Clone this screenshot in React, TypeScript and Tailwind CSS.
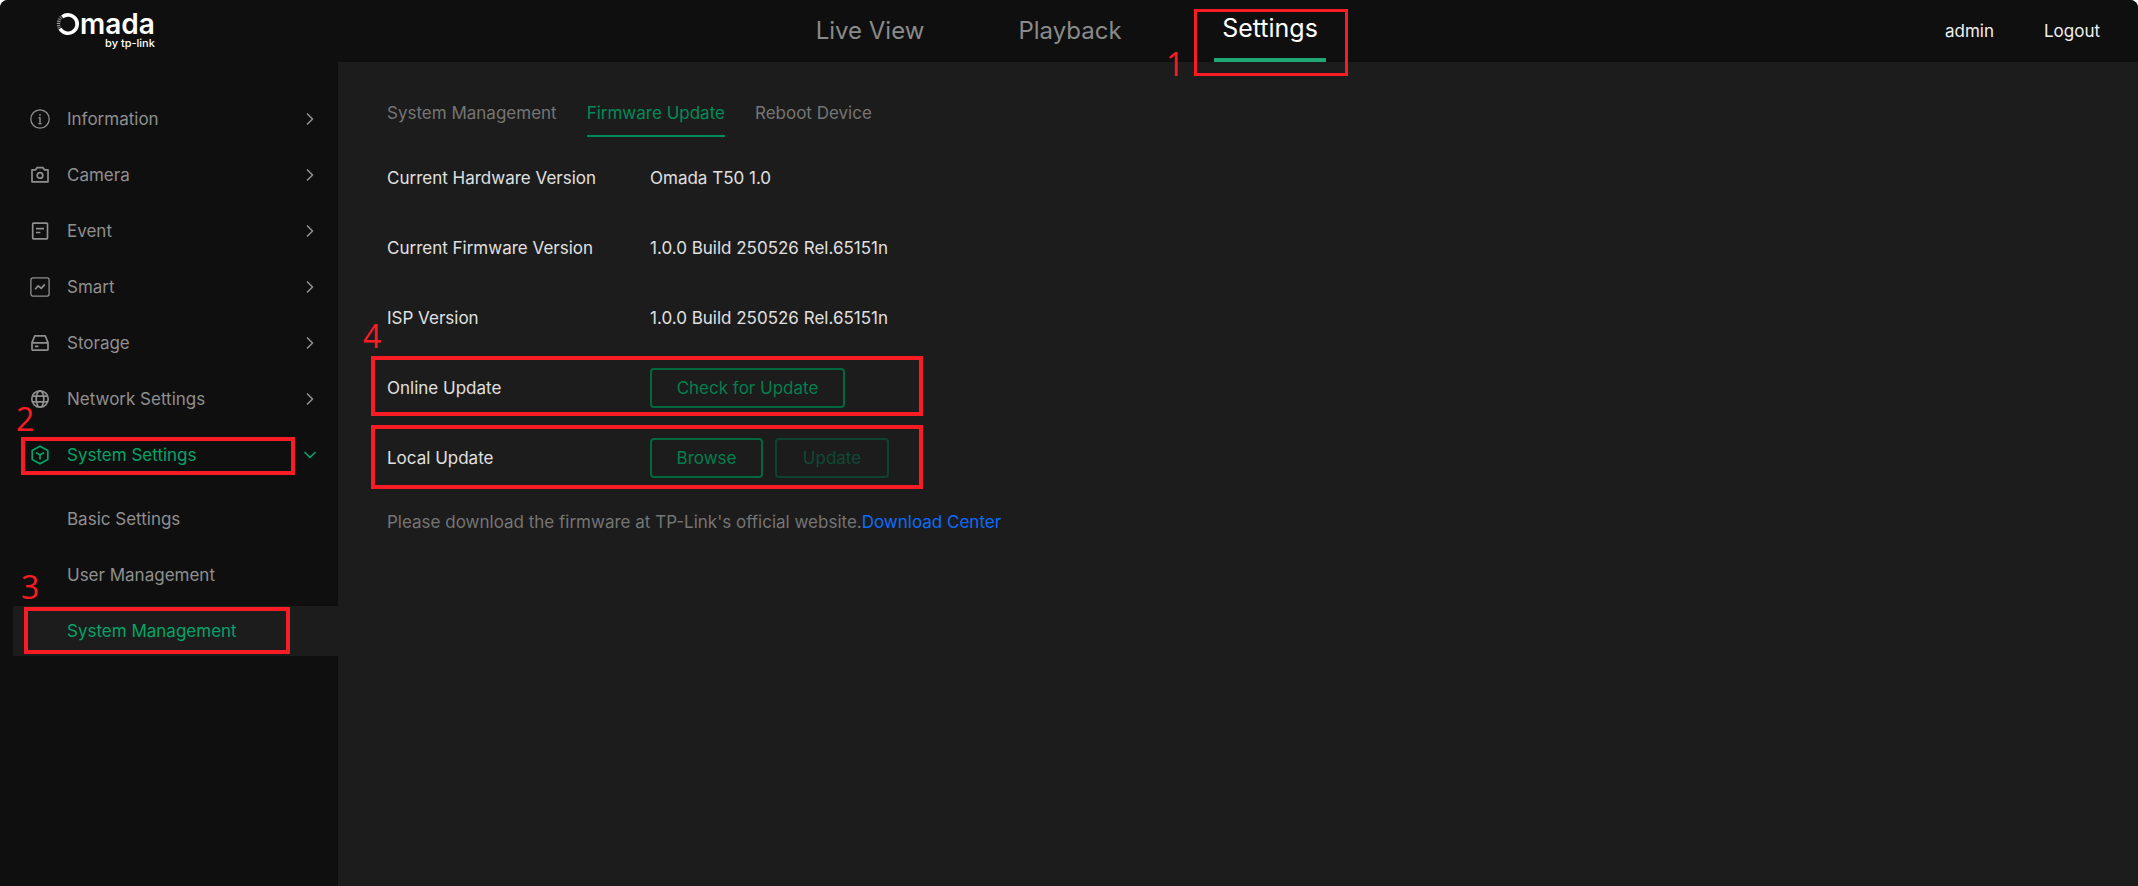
import type { ReactNode } from 'react';
import { ChevronDown, ChevronRight } from 'lucide-react';

interface IconProps {
  children: ReactNode;
}

function Icon({ children }: IconProps) {
  return (
    <svg
      viewBox="0 0 20 20"
      className="h-5 w-5 shrink-0"
      fill="none"
      stroke="currentColor"
      strokeWidth="1.7"
      strokeLinejoin="round"
      aria-hidden="true"
    >
      {children}
    </svg>
  );
}

const menu = [
  {
    label: 'Information',
    icon: (
      <Icon>
        <circle cx="10" cy="10" r="9.2" strokeWidth="1.3" />
        <path d="M10 5v1.8M8.6 8.7H10v5.8M8.4 14.6h3.2" strokeWidth="1.4" />
      </Icon>
    ),
  },
  {
    label: 'Camera',
    icon: (
      <Icon>
        <path d="M2 4.8h3.6l1.5-2.2h5.8l1.5 2.2H18v12H2z" />
        <circle cx="10" cy="10.4" r="2.8" />
      </Icon>
    ),
  },
  {
    label: 'Event',
    icon: (
      <Icon>
        <rect x="2.7" y="2.2" width="14.8" height="15.6" rx="0.8" />
        <path d="M6 7.7h8M6 11.5h4.4" />
      </Icon>
    ),
  },
  {
    label: 'Smart',
    icon: (
      <Icon>
        <rect x="0.9" y="0.9" width="18.2" height="18.2" rx="2" strokeWidth="1.3" />
        <path d="M5.2 12.2l3-3.4 3 2.6 3.6-4" />
      </Icon>
    ),
  },
  {
    label: 'Storage',
    icon: (
      <Icon>
        <path d="M4.8 2.8h10.4L18 9.6v6.6a1 1 0 0 1-1 1H3a1 1 0 0 1-1-1V9.6zM2 9.8h16M4.8 13.4h3.6" />
      </Icon>
    ),
  },
  {
    label: 'Network Settings',
    icon: (
      <Icon>
        <circle cx="10" cy="10" r="8.2" />
        <ellipse cx="10" cy="10" rx="3.8" ry="8.2" />
        <path d="M2.4 7.2h15.2M2.4 12.8h15.2" />
      </Icon>
    ),
  },
  {
    label: 'System Settings',
    icon: (
      <Icon>
        <path d="M10 1.2l7.8 4.4v8.8L10 18.8l-7.8-4.4V5.6z" />
        <path d="M6 7.6l4 2.4 4-2.4M10 10v4.6" />
      </Icon>
    ),
  },
];

const versions = [
  { name: 'Current Hardware Version', value: 'Omada T50 1.0' },
  { name: 'Current Firmware Version', value: '1.0.0 Build 250526 Rel.65151n' },
  { name: 'ISP Version', value: '1.0.0 Build 250526 Rel.65151n' },
];

function Logo() {
  return (
    <a href="#" className="ml-4 flex flex-col items-end text-white" aria-label="Omada by tp-link">
      <span className="flex items-center">
        <svg viewBox="0 0 24 24" className="h-6 w-6" fill="none" stroke="currentColor" aria-hidden="true">
          <path d="M6.2 4.9A9.2 9.2 0 1 1 4 16.6" strokeWidth="3.6" />
          <path d="M5.2 5.2A9.6 9.6 0 0 0 3.4 16" strokeWidth="3.4" strokeDasharray="1 1.1" opacity="0.6" />
        </svg>
        <span className="text-[28px] leading-6 font-semibold">mada</span>
      </span>
      <span className="text-[11px] leading-[14px] font-medium">by tp-link</span>
    </a>
  );
}

function Callout({ className, children }: { className: string; children?: ReactNode }) {
  return (
    <span
      className={`pointer-events-none absolute z-10 font-['Open_Sans',sans-serif] text-[32px] leading-8 text-[#f91c24] ${className}`}
    >
      {children}
    </span>
  );
}

function Header() {
  return (
    <header className="flex h-[62px] items-center bg-[#0f0f0f] pr-[38px] pl-10">
      <div className="flex flex-1">
        <Logo />
      </div>
      <nav className="flex h-full text-2xl text-[#8a8a8a]">
        <a href="#" className="flex w-[200px] items-center justify-center">Live View</a>
        <a href="#" className="flex w-[200px] items-center justify-center">Playback</a>
        <div className="relative flex w-[200px] justify-center">
          <a
            href="#"
            className="flex items-center border-b-4 border-[#1fa874] px-2 text-[25px] text-white"
            aria-current="page"
          >
            Settings
          </a>
          <Callout className="top-[9px] left-[24px] h-[67px] w-[154px] border-[3px] border-[#f91c24]" />
          <Callout className="top-12 -left-1">1</Callout>
        </div>
      </nav>
      <div className="flex flex-1 justify-end gap-[50px] text-[17px] leading-7 text-[#f0f0f0]">
        <button type="button">admin</button>
        <button type="button">Logout</button>
      </div>
    </header>
  );
}

function Sidebar() {
  return (
    <aside className="w-[338px] shrink-0 bg-[#0f0f0f] pt-8 text-[17px] leading-7 text-[#8f8f8f]">
      <ul className="flex flex-col gap-[6px]">
        {menu.map(item => {
          const active = item.label === 'System Settings';
          return (
            <li key={item.label} className="relative">
              <button
                type="button"
                aria-expanded={active}
                className={`flex h-[50px] w-full items-center pr-[18px] pl-[30px] text-left ${active ? 'text-[#00a569]' : ''}`}
              >
                {item.icon}
                <span className="ml-[17px] flex-1">{item.label}</span>
                {active ? <ChevronDown size={20} strokeWidth={2} /> : <ChevronRight size={20} strokeWidth={2} />}
              </button>
              {active && (
                <>
                  <Callout className="top-[7px] left-[21px] h-[38px] w-[274px] border-4 border-[#f91c24]" />
                  <Callout className="-top-[27px] left-4">2</Callout>
                </>
              )}
            </li>
          );
        })}
      </ul>
      <ul className="mt-[14px] flex flex-col gap-[6px] pl-[13px]">
        <li>
          <a href="#" className="flex h-[50px] items-center pl-[54px]">Basic Settings</a>
        </li>
        <li>
          <a href="#" className="flex h-[50px] items-center pl-[54px]">User Management</a>
        </li>
        <li className="relative">
          <a href="#" className="flex h-[50px] items-center bg-[#1c1c1c] pl-[54px] text-[#00a569]" aria-current="page">
            System Management
          </a>
          <Callout className="top-px left-[11px] h-[47px] w-[266px] border-4 border-[#f91c24]" />
          <Callout className="-top-[35px] left-2">3</Callout>
        </li>
      </ul>
    </aside>
  );
}

function FirmwareUpdate() {
  return (
    <main className="flex-1 bg-[#1c1c1c] pt-[34px] pl-[49px] text-[17px] leading-7 text-[#e0e0e0]">
      <nav className="flex gap-[30px] text-[#757575]">
        <a href="#" className="h-[41px] leading-[34px]">System Management</a>
        <a href="#" className="h-[41px] border-b-2 border-[#008c5a] leading-[34px] text-[#008c5a]" aria-current="page">
          Firmware Update
        </a>
        <a href="#" className="h-[41px] leading-[34px]">Reboot Device</a>
      </nav>
      <dl className="mt-[6px]">
        {versions.map(row => (
          <div key={row.name} className="flex h-[70px] items-center">
            <dt className="w-[263px]">{row.name}</dt>
            <dd>{row.value}</dd>
          </div>
        ))}
        <div className="relative flex h-[70px] items-center">
          <dt className="w-[263px]">Online Update</dt>
          <dd>
            <button type="button" className="h-10 w-[195px] rounded border-2 border-[#00683f] text-[#00804f]">
              Check for Update
            </button>
          </dd>
          <Callout className="top-[3px] -left-4 h-[60px] w-[552px] border-4 border-[#f91c24]" />
          <Callout className="-top-[33px] -left-6">4</Callout>
        </div>
        <div className="relative flex h-[70px] items-center">
          <dt className="w-[263px]">Local Update</dt>
          <dd className="flex gap-3">
            <button type="button" className="h-10 w-[113px] rounded border-2 border-[#00683f] text-[#00804f]">
              Browse
            </button>
            <button type="button" disabled className="h-10 w-[114px] rounded border-2 border-[#0d422f] text-[#0f4a36]">
              Update
            </button>
          </dd>
          <Callout className="top-[2px] -left-4 h-[64px] w-[552px] border-4 border-[#f91c24]" />
        </div>
      </dl>
      <p className="mt-[15px] text-[#757575]">
        Please download the firmware at TP-Link's official website.
        <a href="#" className="text-[#0a6cff]">Download Center</a>
      </p>
    </main>
  );
}

export default function App() {
  return (
    <div className="bg-white font-['Inter',sans-serif]">
      <div className="flex min-h-screen flex-col overflow-hidden rounded-t-lg bg-[#1c1c1c]">
        <Header />
        <div className="flex flex-1">
          <Sidebar />
          <FirmwareUpdate />
        </div>
      </div>
    </div>
  );
}
